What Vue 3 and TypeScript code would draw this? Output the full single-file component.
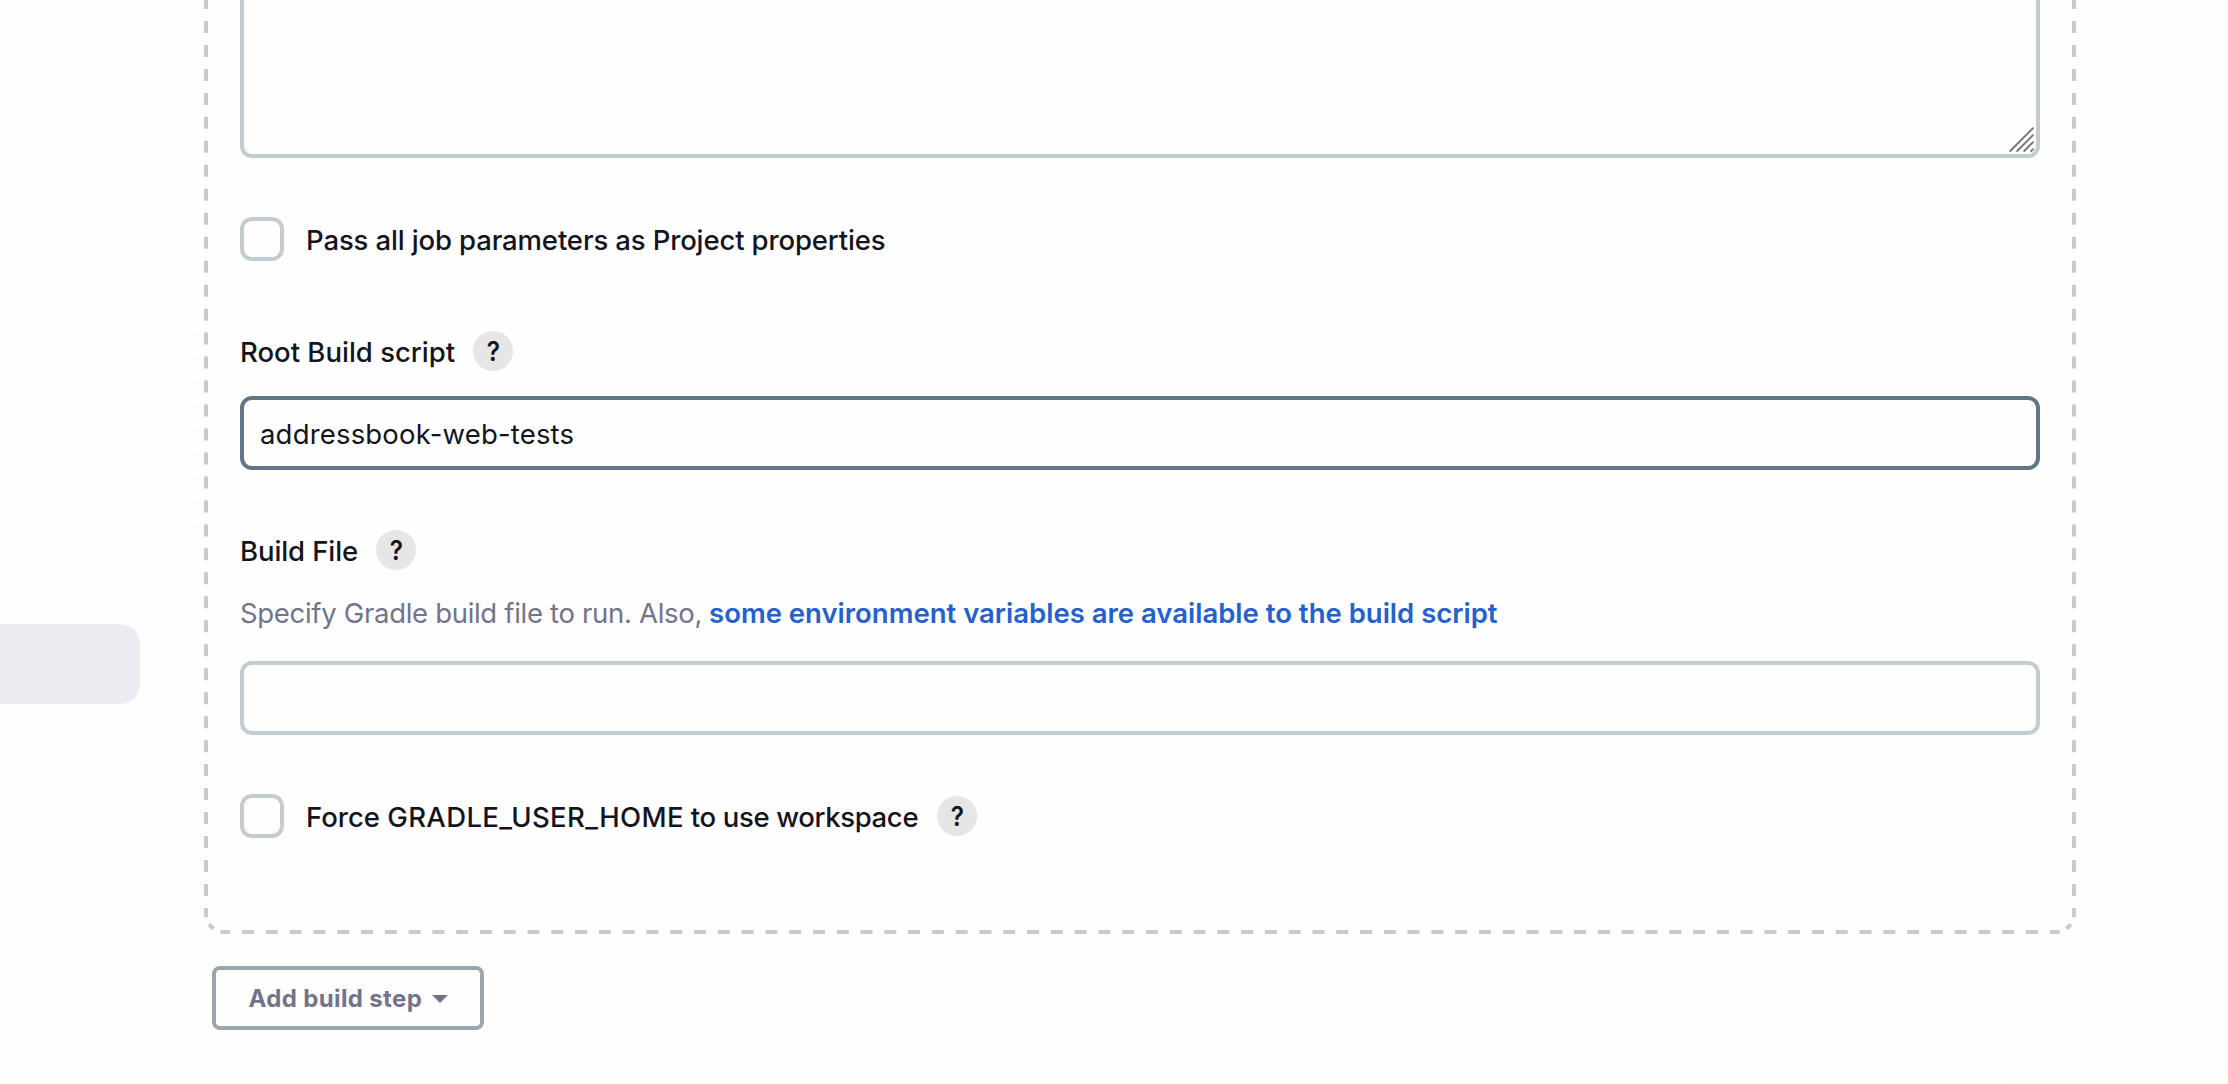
<script setup lang="ts">
import { ref } from 'vue'

const projectProperties = ref('')
const passAll = ref(false)
const rootBuildScript = ref('addressbook-web-tests')
const buildFile = ref('')
const forceHome = ref(false)
</script>

<template>
  <div class="page">
    <aside class="sidebar">
      <div class="sidebar-item"></div>
    </aside>
    <main class="content">
      <section class="step">
        <svg class="outline" width="1872" height="934" viewBox="204 0 1872 934" aria-hidden="true">
          <g fill="none" stroke="#c3ccd1" stroke-width="4">
            <path d="M206 -3V917.3M2074 -3V917.3" stroke-dasharray="12 11.972" />
            <path d="M220.5 932H2059.7" stroke-dasharray="12 11.786" stroke-dashoffset="2.2" />
            <path d="M209 924.4L213.6 928.6M2071 924.4L2066.4 928.6" />
          </g>
        </svg>
        <div class="area-wrap">
          <textarea v-model="projectProperties" class="field area"></textarea>
          <svg class="grip" width="26" height="26" viewBox="0 0 26 26" aria-hidden="true">
            <path d="M2.2 25L25 2.2M9.2 25L25 9.2M16.2 25L25 16.2M23.2 25L25 23.2" stroke="#737373" stroke-width="1.8" stroke-linecap="round" />
          </svg>
        </div>
        <label class="check-row">
          <input v-model="passAll" type="checkbox" class="box" />
          <span class="text t-pass">Pass all job parameters as Project properties</span>
        </label>
        <div class="label-row root">
          <span class="text">Root Build script</span>
          <a class="help"><span>?</span></a>
        </div>
        <input v-model="rootBuildScript" type="text" class="field active" />
        <div class="label-row file">
          <span class="text t-file">Build File</span>
          <a class="help"><span>?</span></a>
        </div>
        <div class="description">
          <span class="t-desc">Specify Gradle build file to run. Also,</span>
          <a class="link">some environment variables are available to the build script</a>
        </div>
        <input v-model="buildFile" type="text" class="field" />
        <label class="check-row">
          <input v-model="forceHome" type="checkbox" class="box" />
          <span class="text t-force">Force <span class="t-var">GRADLE_USER_HOME</span><span class="t-tail"> to use workspace</span></span>
          <a class="help"><span>?</span></a>
        </label>
      </section>
      <button type="button" class="add">
        <span>Add build step</span>
        <svg width="16" height="8" viewBox="0 0 16 8" aria-hidden="true"><path d="M0 0H16L8 8Z" fill="#73738c" /></svg>
      </button>
    </main>
    <div class="corner"></div>
  </div>
</template>

<style>
body {
  margin: 0;
  background: #fefefe;
}
</style>

<style scoped>
.page {
  position: relative;
  display: flex;
  width: 2228px;
  height: 1084px;
  overflow: hidden;
  background: #fefefe;
  color: #14141f;
  font-family: Inter, "Liberation Sans", sans-serif;
  font-size: 27.5px;
}
.page * {
  box-sizing: border-box;
}
.sidebar {
  width: 204px;
  padding-top: 624px;
  flex: none;
}
.sidebar-item {
  width: 140px;
  height: 80px;
  border-radius: 0 20px 20px 0;
  background: #ecebf2;
}
.content {
  width: 1872px;
  flex: none;
}
.step {
  position: relative;
  display: flex;
  flex-direction: column;
  height: 934px;
  padding: 0 36px;
}
.outline {
  position: absolute;
  inset: 0;
  pointer-events: none;
}
.area-wrap {
  position: relative;
  height: 158px;
  flex: none;
}
.field {
  display: block;
  width: 1800px;
  height: 74px;
  flex: none;
  margin: 0;
  padding: 2px 16px 0;
  border: 4px solid #c3ccd1;
  border-radius: 12px;
  outline: none;
  background: #fefefe;
  color: #14141f;
  font: inherit;
  letter-spacing: 0.18px;
}
.area {
  height: 158px;
  border-top: 0;
  border-radius: 0 0 12px 12px;
  resize: none;
}
.active {
  border-color: #607588;
}
.grip {
  position: absolute;
  right: 6px;
  bottom: 6px;
}
.text {
  padding-top: 2px;
}
.check-row {
  display: flex;
  align-items: center;
  height: 44px;
  margin-top: 59px;
  font-weight: 500;
  white-space: nowrap;
}
.check-row > .text {
  margin-left: 22px;
}
.t-pass {
  letter-spacing: -0.13px;
}
.t-file {
  letter-spacing: -0.1px;
}
.t-force {
  margin-right: 1px;
}
.t-var {
  letter-spacing: 0.35px;
}
.t-tail {
  letter-spacing: -0.35px;
}
.t-desc {
  letter-spacing: -0.31px;
}
.box {
  appearance: none;
  width: 44px;
  height: 44px;
  margin: 0;
  border: 4px solid #c3ccd1;
  border-radius: 12px;
  background: #fefefe;
}
.label-row {
  display: flex;
  align-items: center;
  height: 40px;
  font-weight: 500;
  white-space: nowrap;
}
.root {
  margin: 70px 0 25px;
}
.file {
  margin-top: 60px;
}
.help {
  display: flex;
  align-items: center;
  justify-content: center;
  width: 40px;
  height: 40px;
  margin-left: 18px;
  border-radius: 50%;
  background: #e6e6e6;
  font-size: 27px;
  font-weight: 600;
}
.help span {
  transform: scaleX(0.9);
}
.description {
  display: flex;
  align-items: center;
  height: 40px;
  margin: 23px 0 28px;
  color: #73738c;
  white-space: nowrap;
}
.link {
  margin-left: 7px;
  color: #2460cf;
  font-weight: 600;
}
.add {
  display: flex;
  align-items: center;
  width: 272px;
  height: 64px;
  margin: 32px 0 0 8px;
  padding: 1px 0 0 32.5px;
  border: 4px solid #9ba5ad;
  border-radius: 8px;
  background: #fefefe;
  color: #73738c;
  font: 700 24px Inter, "Liberation Sans", sans-serif;
  letter-spacing: 0.36px;
  white-space: nowrap;
}
.add svg {
  margin-left: 10px;
}
.corner {
  position: absolute;
  right: 0;
  bottom: 0;
  width: 221px;
  height: 17px;
  border-top-left-radius: 32px 17px;
  background: #fdfdfd;
}
</style>
